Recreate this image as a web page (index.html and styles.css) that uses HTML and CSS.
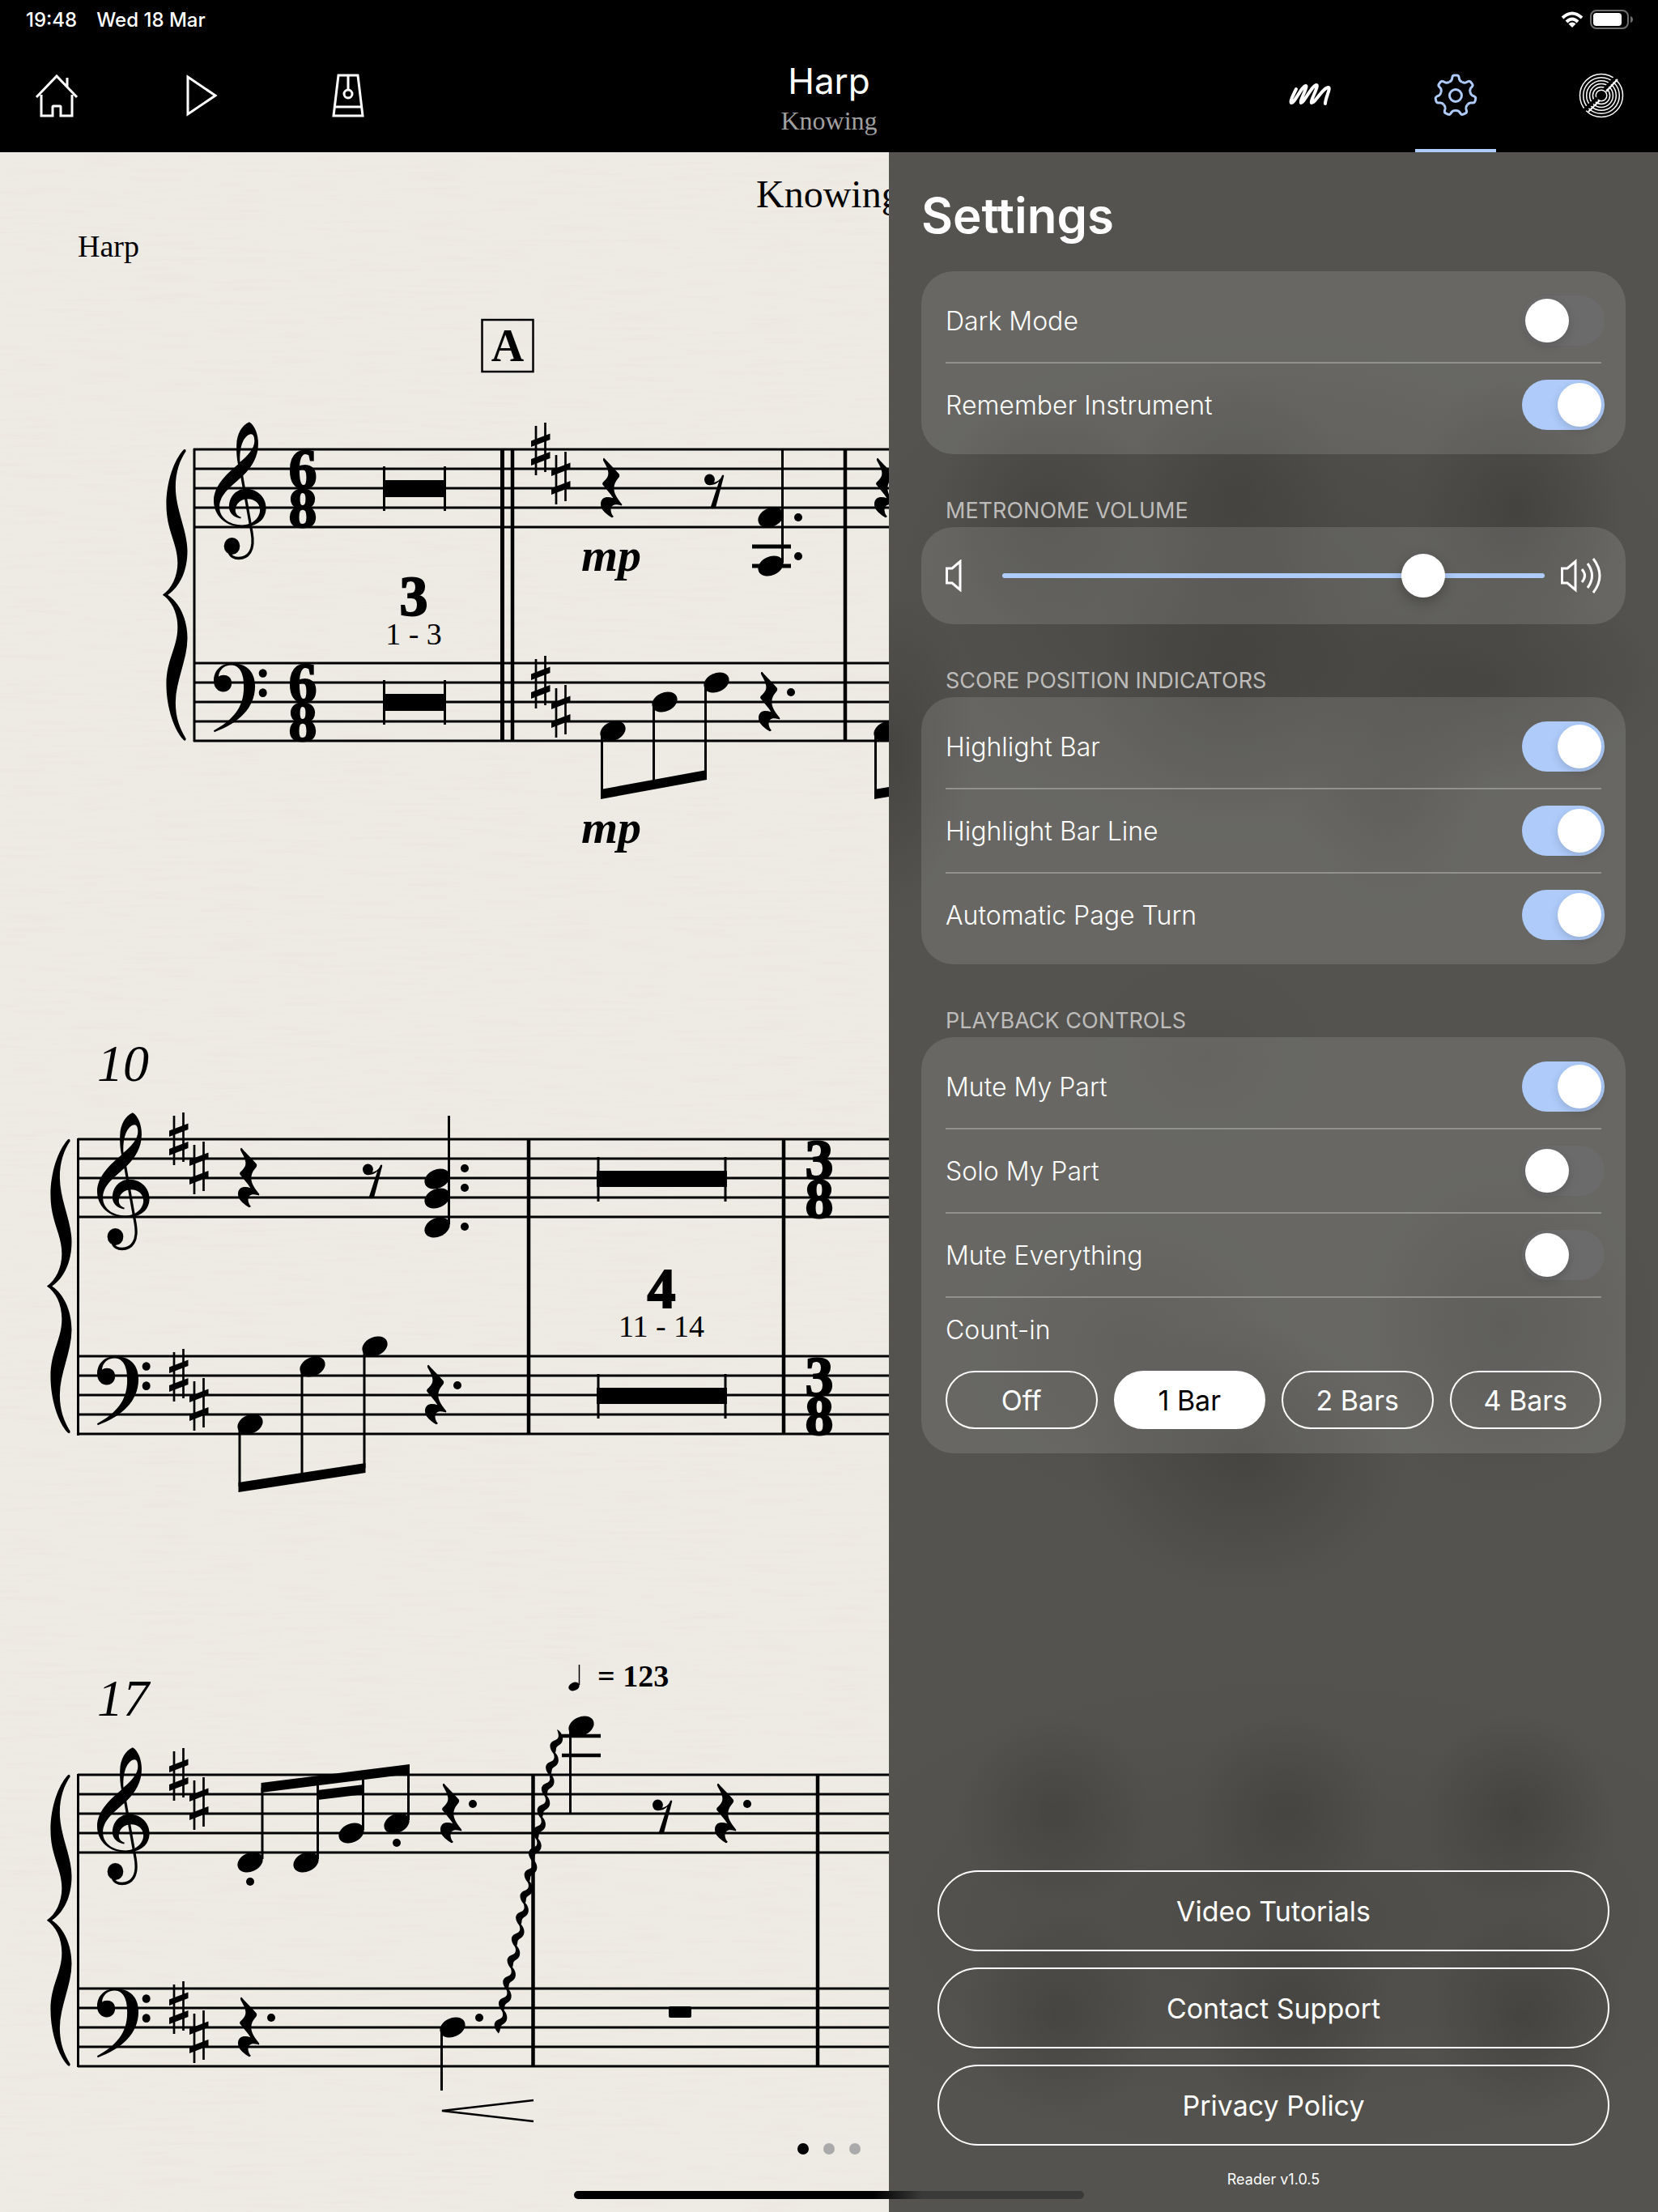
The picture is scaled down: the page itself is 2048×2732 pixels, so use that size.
FILE: index.html
```html
<!DOCTYPE html>
<html lang="en">
<head>
    <meta charset="UTF-8">
    <meta name="viewport" content="width=device-width, initial-scale=1.0">
    <title>Harp - Knowing</title>
    <link rel="stylesheet" href="styles.css">
</head>
<body>

<header class="top-bar">
    <div class="status">
        <div class="status-left">
            <span>19:48</span>
            <span>Wed 18 Mar</span>
        </div>
        <div class="status-right">
            <svg class="wifi" viewBox="0 0 28 20" aria-hidden="true">
                <g fill="none" stroke="#fff" stroke-width="4">
                    <path d="M2 8 Q14 -3 26 8"/>
                    <path d="M7 13 Q14 6 21 13"/>
                </g>
                <path d="M14 20 L9.500 15.500 Q14 11.500 18.500 15.500 Z" fill="#fff"/>
            </svg>
            <svg class="battery" viewBox="0 0 54 24" aria-hidden="true">
                <rect x="1" y="1" width="46" height="22" rx="7" fill="none" stroke="#6e6e6e" stroke-width="2"/>
                <rect x="4" y="4" width="35" height="16" rx="4" fill="#fff"/>
                <path d="M50 8 Q53 9 53 12 T50 16 Z" fill="#6e6e6e"/>
            </svg>
        </div>
    </div>

    <nav class="nav">
        <div class="nav-group">
            <button class="nav-button" aria-label="Home">
                <svg viewBox="0 0 60 60">
                    <path d="M5 32 L30 6 L55 32 M43 8 V19 M11 29 V55 H25 V44 Q25 43 26 43 H34 Q35 43 35 44 V55 H49 V29"/>
                </svg>
            </button>
            <button class="nav-button" aria-label="Play">
                <svg viewBox="0 0 60 60">
                    <path d="M12 7 L46 30 L12 53 Z"/>
                </svg>
            </button>
            <button class="nav-button" aria-label="Metronome">
                <svg viewBox="0 0 60 60">
                    <path d="M18 5 H42 L48 55 H12 Z M14 44 H46 M30 5 V23"/>
                    <circle cx="30" cy="28" r="5"/>
                </svg>
            </button>
        </div>

        <div class="nav-title">
            <h1>Harp</h1>
            <p>Knowing</p>
        </div>

        <div class="nav-group nav-group-right">
            <button class="nav-button" aria-label="Annotate">
                <svg viewBox="0 0 60 60">
                    <path class="scribble" d="M13 22 C9 30 5 38 7 39 C11 40 20 18 25 18 C28 18 17 37 19 39 C22 40 33 17 38 17 C42 17 30 37 32 39 C36 40 47 19 53 20 C56 21 49 33 49 40"/>
                </svg>
            </button>
            <button class="nav-button active" aria-label="Settings">
                <svg viewBox="-30 -30 60 60">
                    <defs>
                        <path id="tooth" d="M-8 -16.700 C-6 -17.600 -5 -18.500 -4.600 -20 L-4 -23 Q-3.500 -25 -1.500 -25 H1.500 Q3.500 -25 4 -23 L4.600 -20 C5 -18.500 6 -17.600 8 -16.700"/>
                    </defs>
                    <use href="#tooth"/>
                    <use href="#tooth" transform="rotate(51.430)"/>
                    <use href="#tooth" transform="rotate(102.860)"/>
                    <use href="#tooth" transform="rotate(154.290)"/>
                    <use href="#tooth" transform="rotate(205.710)"/>
                    <use href="#tooth" transform="rotate(257.140)"/>
                    <use href="#tooth" transform="rotate(308.570)"/>
                    <circle r="7.500"/>
                </svg>
            </button>
            <button class="nav-button" aria-label="Tuner">
                <svg class="rings" viewBox="-30 -30 60 60">
                    <circle r="26.500"/>
                    <circle r="22.300"/>
                    <circle r="18.300"/>
                    <circle r="14.400"/>
                    <circle r="10.600"/>
                    <circle r="6.800"/>
                    <path d="M17 -22 L3 -7 M-21 18 L-5 3" stroke="#000" stroke-width="4"/>
                    <path d="M20 -20 L6 -5 M-16 20 L-2 6" stroke-width="2.200"/>
                </svg>
            </button>
        </div>
    </nav>
</header>

<main class="stage">
    <svg class="score" viewBox="0 188 1098 2544" role="img" aria-label="Harp part, page 1">
        <defs>
            <filter id="paper" x="0" y="0" width="100%" height="100%">
                <feTurbulence type="fractalNoise" baseFrequency="0.012 0.220" numOctaves="3" seed="4"/>
                <feColorMatrix values="0 0 0 0 0.750  0 0 0 0 0.650  0 0 0 0 0.580  0.300 0 0 0 -0.110"/>
            </filter>

            <g id="staff">
                <path d="M0 0 H1100 M0 24 H1100 M0 48 H1100 M0 72 H1100 M0 96 H1100" stroke="#000" stroke-width="3"/>
            </g>

            <!-- origin: left edge, G line -->
            <g id="treble" transform="scale(0.357 0.383) translate(-224 -574)">
                <path fill-rule="evenodd" d="M347 298 C366 308 378 338 378 368 C378 410 356 444 326 470 C286 505 244 530 244 572 C244 608 280 630 322 630 C360 630 384 605 384 582 C384 560 365 546 342 546 C318 546 299 562 299 582 C299 594 308 602 319 605 L317 609 C295 606 277 592 277 572 C277 535 305 513 335 513 C380 513 405 545 405 574 C405 612 375 636 322 636 C265 636 224 600 224 552 C224 505 265 468 308 434 C304 415 302 395 303 372 C304 335 322 308 347 298 Z M352 337 C334 340 312 365 315 427 C345 405 364 382 365 360 C365 347 362 336 352 337 Z"/>
                <path d="M320 466 L356 655 C367 713 343 737 310 737 C296 737 284 732 278 720" fill="none" stroke="#000" stroke-width="9"/>
                <circle cx="287" cy="698" r="27.500"/>
            </g>

            <!-- origin: left edge, F line -->
            <g id="bass" transform="scale(0.357 0.383) translate(-224 -1148)">
                <path d="M287 1086 C340 1086 367 1115 367 1160 C367 1230 310 1280 226 1308 L224 1303 C290 1268 327 1230 328 1165 C329 1120 315 1093 285 1092 C260 1092 242 1108 241 1129 C251 1120 286 1120 286 1150 C286 1167 273 1178 257 1178 C240 1178 224 1165 224 1143 C224 1108 250 1086 287 1086 Z"/>
                <circle cx="394" cy="1118" r="14"/>
                <circle cx="394" cy="1181" r="14"/>
            </g>

            <g id="brace" transform="scale(0.357 0.383) translate(-157 -385)">
                <path d="M122 387 Q130 380 131 391 C110 420 95 458 95 508 C95 580 136 650 136 715 C136 780 110 832 68 859 C110 885 136 940 136 1000 C136 1070 95 1140 95 1210 C95 1260 110 1295 131 1327 Q130 1338 122 1331 C90 1300 63 1225 63 1150 C63 1070 102 1030 102 965 C102 915 80 878 50 859 C80 840 102 800 102 755 C102 690 63 650 63 565 C63 490 90 420 122 387 Z"/>
            </g>

            <g id="sharp">
                <path d="M6 -29 V32 M17.500 -33 V28" stroke="#000" stroke-width="2.700"/>
                <path d="M0 -10.500 L23.500 -19.500 V-12 L0 -3 Z M0 12 L23.500 3 V11 L0 20 Z"/>
            </g>
            <g id="key">
                <use href="#sharp"/>
                <use href="#sharp" x="25" y="36"/>
            </g>

            <!-- rests: left edge, middle line -->
            <g id="quarter-rest" transform="scale(0.357 0.383) translate(-711 -511)">
                <path d="M723 414 C732 424 752 442 775 466 C777 470 776 474 773 477 C757 494 752 510 762 532 C768 543 777 554 784 562 C786 567 783 568 779 566 C758 560 746 566 746 582 C747 590 750 597 755 601 C755 605 750 607 746 604 C725 590 711 580 711 562 C711 538 735 536 754 543 C744 528 732 516 718 500 C716 497 717 494 720 491 C735 478 740 468 736 455 C733 442 726 432 720 422 C718 417 720 414 723 414 Z"/>
            </g>
            <g id="eighth-rest" transform="scale(0.357 0.383) translate(-1142 -511)">
                <circle cx="1160" cy="483" r="18"/>
                <path d="M1176 492 C1190 490 1200 480 1203 470 Q1208 466 1210 471 L1181 574 Q1170 580 1163 574 L1193 489 C1184 497 1175 501 1160 501 Z"/>
            </g>

            <ellipse id="head" rx="16.300" ry="11.600" transform="rotate(-24)"/>
            <circle id="dot" r="5"/>

            <path id="wiggle" d="M0 0 C4.500 2 9 9 6.500 15 C4 20 -0.500 20 -1 23.500 C-1.400 26 -1.500 29 -3.500 31 C-6 28 -9 24 -8.500 19 C-7 15 -5 14.500 -1.800 13 C2.500 11 3 8 0 0 Z"/>
        </defs>

        <rect y="188" width="1098" height="2544" filter="url(#paper)"/>

        <text x="934" y="256" font-size="48">Knowing</text>
        <text x="96" y="317" font-size="38">Harp</text>

        <!-- bars 1 - 4 -->
        <g>
            <rect x="595.500" y="395" width="63" height="64" fill="none" stroke="#000" stroke-width="2.500"/>
            <text class="mid bold" x="627" y="446" font-size="56">A</text>
            <use href="#brace" transform="translate(239 555) scale(1 0.990)"/>
            <svg x="239" y="540" width="859" height="390" viewBox="0 -15 859 390">
                <use href="#staff"/>
                <use href="#staff" y="264"/>
            </svg>
            <path d="M240 554 V916" stroke="#000" stroke-width="3"/>
            <path d="M620.500 554 V916" stroke="#000" stroke-width="5"/>
            <path d="M633 554 V916 M1044 554 V916" stroke="#000" stroke-width="4.500"/>
            <use href="#treble" transform="translate(264 627)"/>
            <use href="#bass" transform="translate(264 843)"/>
            <g class="meter">
                <text x="374" y="603">6</text>
                <text x="374" y="651">8</text>
                <text x="374" y="867">6</text>
                <text x="374" y="915">8</text>
                <text x="511" y="760">3</text>
            </g>
            <text class="mid" x="511" y="796" font-size="38">1 - 3</text>
            <path d="M473 593 H551 V614 H473 Z M473 857 H551 V878 H473 Z"/>
            <path d="M474.500 576 V631 M549.500 576 V631 M474.500 840 V895 M549.500 840 V895" stroke="#000" stroke-width="3"/>
            <use href="#key" x="656" y="555"/>
            <use href="#key" x="656" y="843"/>
            <use href="#quarter-rest" transform="translate(742 603)"/>
            <use href="#eighth-rest" transform="translate(870 603)"/>
            <use href="#head" transform="translate(952 639)"/>
            <use href="#head" transform="translate(952 699)"/>
            <path d="M966.500 555 V695" stroke="#000" stroke-width="3"/>
            <path d="M929 675 H977 M929 699 H977" stroke="#000" stroke-width="5"/>
            <use href="#dot" x="986" y="639"/>
            <use href="#dot" x="986" y="687"/>
            <text class="dynamic" x="718" y="705">mp</text>
            <text class="dynamic" x="718" y="1041">mp</text>
            <use href="#head" transform="translate(757 903)"/>
            <use href="#head" transform="translate(821 867)"/>
            <use href="#head" transform="translate(885 843)"/>
            <path d="M743.500 906 V980 M807.500 870 V970 M871.500 846 V960 M1081.500 906 V980" stroke="#000" stroke-width="3"/>
            <path d="M742 975 L873 951 V963 L742 987 Z M1080 975 L1098 972 V984 L1080 987 Z"/>
            <use href="#quarter-rest" transform="translate(937 867)"/>
            <use href="#dot" x="977" y="855"/>
            <use href="#quarter-rest" transform="translate(1080 603)"/>
            <use href="#head" transform="translate(1095 903)"/>
        </g>

        <!-- bars 10 - 15 -->
        <g>
            <text class="italic" x="120" y="1335" font-size="64">10</text>
            <use href="#brace" transform="translate(96 1407)"/>
            <svg x="96" y="1390" width="1002" height="400" viewBox="0 -17 1002 400">
                <use href="#staff"/>
                <use href="#staff" y="268"/>
            </svg>
            <path d="M96.500 1406 V1773" stroke="#000" stroke-width="3"/>
            <path d="M653 1406 V1772 M968 1406 V1772" stroke="#000" stroke-width="4.500"/>
            <use href="#treble" transform="translate(120 1480)"/>
            <use href="#bass" transform="translate(120 1699)"/>
            <use href="#key" x="209" y="1407"/>
            <use href="#key" x="209" y="1699"/>
            <use href="#quarter-rest" transform="translate(294 1455)"/>
            <use href="#eighth-rest" transform="translate(448 1455)"/>
            <use href="#head" transform="translate(540 1456)"/>
            <use href="#head" transform="translate(540 1480)"/>
            <use href="#head" transform="translate(540 1516)"/>
            <path d="M554.500 1378 V1512" stroke="#000" stroke-width="3"/>
            <use href="#dot" x="574" y="1443"/>
            <use href="#dot" x="574" y="1467"/>
            <use href="#dot" x="574" y="1515"/>
            <use href="#head" transform="translate(309 1759)"/>
            <use href="#head" transform="translate(386 1688)"/>
            <use href="#head" transform="translate(463 1663)"/>
            <path d="M296 1762 V1836 M373 1691 V1825 M450 1666 V1813" stroke="#000" stroke-width="3"/>
            <path d="M294.500 1831 L451.500 1807 V1819 L294.500 1843 Z"/>
            <use href="#quarter-rest" transform="translate(525 1723)"/>
            <use href="#dot" x="565" y="1711"/>
            <path d="M737 1446 H898 V1466 H737 Z M737 1714 H898 V1734 H737 Z"/>
            <path d="M739 1429 V1484 M896 1429 V1484 M739 1697 V1752 M896 1697 V1752" stroke="#000" stroke-width="3"/>
            <g class="meter">
                <text x="817" y="1615">4</text>
                <text x="1012" y="1456">3</text>
                <text x="1012" y="1504">8</text>
                <text x="1012" y="1724">3</text>
                <text x="1012" y="1772">8</text>
            </g>
            <text class="mid" x="817" y="1651" font-size="38">11 - 14</text>
        </g>

        <!-- bars 17 - 19 -->
        <g>
            <text class="italic" x="120" y="2119" font-size="64">17</text>
            <use href="#brace" transform="translate(96 2192) scale(1 0.990)"/>
            <svg x="96" y="2175" width="1002" height="400" viewBox="0 -17 1002 400">
                <use href="#staff"/>
                <use href="#staff" y="264"/>
            </svg>
            <path d="M96.500 2191 V2553" stroke="#000" stroke-width="3"/>
            <path d="M658.500 2191 V2553 M1010 2191 V2553" stroke="#000" stroke-width="4.500"/>
            <use href="#treble" transform="translate(120 2264)"/>
            <use href="#bass" transform="translate(120 2480)"/>
            <use href="#key" x="209" y="2192"/>
            <use href="#key" x="209" y="2480"/>
            <use href="#head" transform="translate(309 2300)"/>
            <use href="#head" transform="translate(378 2300)"/>
            <use href="#head" transform="translate(434 2264)"/>
            <use href="#head" transform="translate(490 2252)"/>
            <path d="M324 2208 V2296 M392.500 2200 V2296 M448.500 2195 V2260 M504.500 2185 V2248" stroke="#000" stroke-width="3"/>
            <path d="M322.500 2202 L506 2179 V2191 L322.500 2214 Z M392.500 2211 L450 2204 V2216 L392.500 2223 Z"/>
            <use href="#dot" x="309" y="2324"/>
            <use href="#dot" x="490" y="2276"/>
            <use href="#quarter-rest" transform="translate(544 2240)"/>
            <use href="#dot" x="584" y="2228"/>
            <use href="#quarter-rest" transform="translate(294 2504)"/>
            <use href="#dot" x="335" y="2492"/>
            <use href="#head" transform="translate(559 2504)"/>
            <path d="M545.500 2506 V2582" stroke="#000" stroke-width="3"/>
            <use href="#dot" x="592" y="2492"/>
            <path d="M659 2594 L546 2607 L659 2620" fill="none" stroke="#000" stroke-width="2.700"/>

            <g id="wiggle-half">
                <use href="#wiggle" x="688" y="2136"/>
                <use href="#wiggle" x="682.700" y="2162.500"/>
                <use href="#wiggle" x="677.400" y="2189"/>
                <use href="#wiggle" x="672.100" y="2215.500"/>
                <use href="#wiggle" x="666.800" y="2242"/>
                <use href="#wiggle" x="661.500" y="2268.500"/>
                <use href="#wiggle" x="656.200" y="2295"/>
            </g>
            <use href="#wiggle-half" x="-37" y="185.500"/>

            <use href="#head" transform="translate(718 2132)"/>
            <path d="M704.500 2134 V2239" stroke="#000" stroke-width="3"/>
            <path d="M694 2144 H742 M694 2168 H742" stroke="#000" stroke-width="4.500"/>
            <use href="#eighth-rest" transform="translate(806 2240)"/>
            <use href="#quarter-rest" transform="translate(883 2240)"/>
            <use href="#dot" x="923" y="2228"/>
            <rect x="826" y="2478" width="28" height="14" rx="2"/>

            <use href="#head" transform="translate(709 2083) scale(0.430)"/>
            <path d="M715.500 2056 V2081" stroke="#000" stroke-width="1.500"/>
            <text class="bold" x="738" y="2083" font-size="38">= 123</text>
        </g>

        <circle cx="992" cy="2654" r="7"/>
        <circle cx="1024" cy="2654" r="7" fill="#aaa"/>
        <circle cx="1056" cy="2654" r="7" fill="#aaa"/>
    </svg>

    <section class="settings">
        <h2>Settings</h2>

        <div class="card">
            <div class="row">
                <label for="darkMode">Dark Mode</label>
                <input type="checkbox" class="toggle" id="darkMode">
            </div>
            <div class="row">
                <label for="rememberInstrument">Remember Instrument</label>
                <input type="checkbox" class="toggle" id="rememberInstrument" checked>
            </div>
        </div>

        <h3><label for="volume">METRONOME VOLUME</label></h3>
        <div class="card volume">
            <svg class="speaker-low" viewBox="0 0 20 40" aria-hidden="true">
                <path d="M1.500 11 H8 L18 2.500 V37.500 L8 29 H1.500 Z"/>
            </svg>
            <input type="range" class="slider" id="volume" min="0" max="100" value="80">
            <svg class="speaker-high" viewBox="0 0 50 46" aria-hidden="true">
                <path d="M1.500 14 H8 L18 5.500 V40.500 L8 32 H1.500 Z M26 15 Q33 23 26 31 M33 8 Q44 23 33 38 M40 2 Q56 23 40 44"/>
            </svg>
        </div>

        <h3>SCORE POSITION INDICATORS</h3>
        <div class="card">
            <div class="row">
                <label for="highlightBar">Highlight Bar</label>
                <input type="checkbox" class="toggle" id="highlightBar" checked>
            </div>
            <div class="row">
                <label for="highlightBarLine">Highlight Bar Line</label>
                <input type="checkbox" class="toggle" id="highlightBarLine" checked>
            </div>
            <div class="row">
                <label for="pageTurn">Automatic Page Turn</label>
                <input type="checkbox" class="toggle" id="pageTurn" checked>
            </div>
        </div>

        <h3>PLAYBACK CONTROLS</h3>
        <div class="card">
            <div class="row">
                <label for="muteMyPart">Mute My Part</label>
                <input type="checkbox" class="toggle" id="muteMyPart" checked>
            </div>
            <div class="row">
                <label for="soloMyPart">Solo My Part</label>
                <input type="checkbox" class="toggle" id="soloMyPart">
            </div>
            <div class="row">
                <label for="muteEverything">Mute Everything</label>
                <input type="checkbox" class="toggle" id="muteEverything">
            </div>
            <div class="count-in" role="group" aria-labelledby="countIn">
                <p id="countIn">Count-in</p>
                <div class="count-in-options">
                    <button aria-pressed="false">Off</button>
                    <button aria-pressed="true" class="selected">1 Bar</button>
                    <button aria-pressed="false">2 Bars</button>
                    <button aria-pressed="false">4 Bars</button>
                </div>
            </div>
        </div>

        <div class="actions">
            <button>Video Tutorials</button>
            <button>Contact Support</button>
            <button>Privacy Policy</button>
        </div>
        <p class="version">Reader v1.0.5</p>
    </section>

    <div class="home-indicator"></div>
</main>

</body>
</html>
```
FILE: styles.css
```css
* {
    box-sizing: border-box;
}

body {
    font-family: Inter, "Liberation Sans", sans-serif;
    margin: 0;
    min-height: 100vh;
    display: flex;
    flex-direction: column;
    background-color: #000;
    color: #fff;
}

h1, h2, h3, p {
    margin: 0;
    font-weight: normal;
}

button {
    font-family: inherit;
    color: inherit;
    background: none;
    border: none;
    padding: 0;
    cursor: pointer;
}

/* top bar */
.status {
    display: flex;
    justify-content: space-between;
    align-items: center;
    height: 48px;
    padding: 0 30px 0 32px;
    font-size: 24px;
    font-weight: 500;
}

.status-left {
    display: flex;
    gap: 24px;
}

.status-right {
    display: flex;
    align-items: center;
    gap: 8px;
}

.wifi {
    width: 28px;
    height: 20px;
}

.battery {
    width: 54px;
    height: 24px;
}

.nav {
    display: grid;
    grid-template-columns: 1fr auto 1fr;
    height: 140px;
    padding: 0 20px;
}

.nav-group {
    display: flex;
    gap: 80px;
}

.nav-group-right {
    justify-content: flex-end;
}

.nav-button {
    display: flex;
    justify-content: center;
    width: 100px;
    padding-top: 40px;
    border-bottom: 4px solid transparent;
}

.nav-button.active {
    color: #aecbfa;
    border-bottom-color: #aecbfa;
}

.nav-button svg {
    width: 60px;
    height: 60px;
    fill: none;
    stroke: currentColor;
    stroke-width: 3;
}

.nav-button .scribble {
    stroke-width: 4;
    stroke-linecap: round;
}

.nav-button .rings {
    stroke-width: 1.5;
}

.nav-title {
    text-align: center;
    padding-top: 24px;
}

.nav-title h1 {
    font-size: 44px;
    line-height: 56px;
}

.nav-title p {
    font-family: "Liberation Serif", serif;
    font-size: 32px;
    line-height: 42px;
    color: #a0a0a0;
}

/* score */
.stage {
    position: relative;
    flex: 1;
    display: grid;
    grid-template-columns: 1098fr 950fr;
    background-color: #eeebe5;
    overflow: hidden;
}

.score {
    display: block;
    width: 100%;
    overflow: visible;
    fill: #000;
    font-family: "Liberation Serif", serif;
}

.mid {
    text-anchor: middle;
}

.bold {
    font-weight: bold;
}

.italic {
    font-style: italic;
}

.meter {
    font-size: 70px;
    font-weight: bold;
    text-anchor: middle;
    stroke: #000;
    stroke-width: 2;
}

.dynamic {
    font-size: 58px;
    font-weight: bold;
    font-style: italic;
}

.home-indicator {
    position: absolute;
    left: 50%;
    bottom: 16px;
    width: 630px;
    height: 10px;
    margin-left: -315px;
    border-radius: 5px;
    background: linear-gradient(to right, #000 370px, #3a3a39 430px);
    z-index: 2;
}

/* settings panel, with the score showing through as soft shadows */
.settings {
    position: relative;
    z-index: 1;
    display: flex;
    flex-direction: column;
    padding: 40px 40px 28px;
    background-color: #54534f;
    background-image:
        radial-gradient(ellipse 130px 150px at 190px 440px, #3a383566, transparent),
        radial-gradient(ellipse 130px 150px at 430px 420px, #3a383566, transparent),
        radial-gradient(ellipse 130px 170px at 775px 440px, #3a383588, transparent),
        radial-gradient(ellipse 170px 170px at 420px 650px, #3a383566, transparent),
        radial-gradient(ellipse 260px 120px at 720px 660px, #3a383566, transparent),
        radial-gradient(ellipse 120px 150px at 620px 800px, #3a383544, transparent),
        radial-gradient(ellipse 110px 200px at 0 740px, #3a383588, transparent),
        radial-gradient(ellipse 520px 330px at 460px 540px, #3a383577, transparent),
        radial-gradient(ellipse 160px 130px at 390px 1120px, #3a383522, transparent),
        radial-gradient(ellipse 220px 190px at 300px 1480px, #3a383544, transparent),
        radial-gradient(ellipse 190px 210px at 760px 1450px, #3a383566, transparent),
        radial-gradient(ellipse 200px 170px at 440px 1610px, #3a383588, transparent),
        radial-gradient(ellipse 120px 120px at 205px 2050px, #3a383577, transparent),
        radial-gradient(ellipse 120px 120px at 490px 2050px, #3a383577, transparent),
        radial-gradient(ellipse 120px 120px at 775px 2050px, #3a383588, transparent),
        radial-gradient(ellipse 120px 130px at 210px 2300px, #3a383577, transparent),
        radial-gradient(ellipse 120px 130px at 500px 2300px, #3a383577, transparent),
        radial-gradient(ellipse 120px 130px at 785px 2300px, #3a383588, transparent),
        radial-gradient(ellipse 600px 300px at 480px 2180px, #3a383544, transparent);
}

.settings h2 {
    font-size: 60px;
    line-height: 76px;
    font-weight: 600;
    margin-bottom: 31px;
}

.settings h3 {
    font-size: 27px;
    line-height: 36px;
    padding: 52px 30px 2px;
    color: #bdbcba;
}

.card {
    padding: 10px 30px;
    border-radius: 40px;
    background-color: rgba(255, 255, 255, 0.12);
}

.row {
    display: flex;
    justify-content: space-between;
    align-items: center;
    height: 102px;
}

.row + .row, .count-in {
    box-sizing: content-box;
    border-top: 2px solid #92918f;
}

.row label, .count-in p {
    font-size: 32px;
    font-weight: 300;
}

.toggle {
    appearance: none;
    width: 102px;
    height: 62px;
    margin: 0 -4px 0 0;
    padding: 4px;
    border-radius: 31px;
    background-color: #6c6b6c;
    cursor: pointer;
}

.toggle::before {
    content: "";
    display: block;
    width: 54px;
    height: 54px;
    border-radius: 50%;
    background-color: #fff;
    box-shadow: 0 4px 12px rgba(0, 0, 0, 0.15);
}

.toggle:checked {
    background-color: #aecbfa;
}

.toggle:checked::before {
    margin-left: 40px;
}

.volume {
    display: flex;
    align-items: center;
    height: 120px;
}

.volume svg {
    flex: none;
    fill: none;
    stroke: #fff;
    stroke-width: 3;
}

.speaker-low {
    width: 20px;
    height: 40px;
}

.speaker-high {
    width: 50px;
    height: 46px;
}

.slider {
    appearance: none;
    flex: 1;
    min-width: 0;
    height: 54px;
    margin: 0 20px 0 50px;
    background: none;
}

.slider::-webkit-slider-runnable-track {
    height: 6px;
    border-radius: 3px;
    background-color: #aecbfa;
}

.slider::-webkit-slider-thumb {
    appearance: none;
    width: 54px;
    height: 54px;
    margin-top: -24px;
    border-radius: 50%;
    background-color: #fff;
    box-shadow: 0 6px 16px rgba(0, 0, 0, 0.25);
}

.count-in {
    padding: 20px 0;
}

.count-in p {
    line-height: 40px;
    margin-bottom: 30px;
}

.count-in-options {
    display: grid;
    grid-template-columns: repeat(4, 1fr);
    gap: 20px;
}

.count-in-options button {
    height: 72px;
    border: 2px solid #fff;
    border-radius: 36px;
    font-size: 34px;
}

.count-in-options .selected {
    background-color: #fff;
    color: #000;
}

.actions {
    display: flex;
    flex-direction: column;
    gap: 20px;
    margin: auto 20px 30px;
}

.actions button {
    height: 100px;
    border: 2px solid #fff;
    border-radius: 50px;
    font-size: 34px;
}

.version {
    font-size: 18px;
    line-height: 24px;
    text-align: center;
}
```
